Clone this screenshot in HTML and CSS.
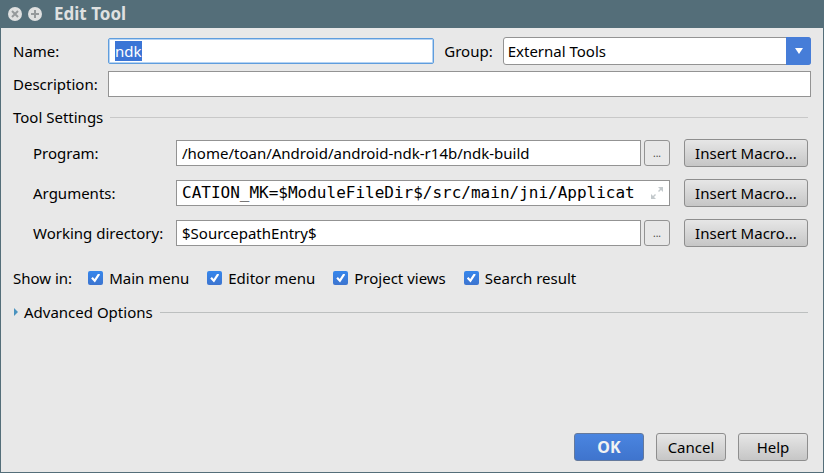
FILE: index.html
```html
<!DOCTYPE html>
<html lang="en">
<head>
<meta charset="utf-8">
<title>Edit Tool</title>
<link rel="stylesheet" href="styles.css">
</head>
<body>
<form class="dialog">
  <header class="titlebar">
    <button type="button" class="wm" aria-label="Close"><svg viewBox="0 0 14 14"><circle cx="7" cy="7" r="7" fill="#dfe0e0"/><path d="M4 4l6 6M10 4l-6 6" stroke="#95999b" stroke-width="2"/></svg></button>
    <button type="button" class="wm" aria-label="Maximize"><svg viewBox="0 0 14 14"><circle cx="7" cy="7" r="7" fill="#dfe0e0"/><path d="M7 3v8M3 7h8" stroke="#95999b" stroke-width="2"/></svg></button>
    <h1>Edit Tool</h1>
  </header>
  <main class="body">
    <div class="general">
      <label for="name">Name:</label>
      <div class="name-row">
        <input id="name" class="field name" type="text" value="ndk" autofocus>
        <label for="group">Group:</label>
        <div class="combo">
          <select id="group"><option>External Tools</option></select>
          <span class="combo-arrow"><svg viewBox="0 0 8 6"><path d="M0 0h8L4 6z" fill="#fff"/></svg></span>
        </div>
      </div>
      <label for="desc">Description:</label>
      <input id="desc" class="field" type="text">
    </div>

    <section>
      <h2 class="rule">Tool Settings</h2>
      <div class="settings">
        <label for="program">Program:</label>
        <div class="path">
          <input id="program" class="field" type="text" value="/home/toan/Android/android-ndk-r14b/ndk-build">
          <button type="button" class="browse" aria-label="Browse program">...</button>
        </div>
        <button type="button" class="btn">Insert Macro...</button>

        <label for="args">Arguments:</label>
        <div class="field expandable">
          <input id="args" type="text" value="CATION_MK=$ModuleFileDir$/src/main/jni/Applicat">
          <button type="button" class="expand" aria-label="Expand"><svg viewBox="0 0 12 12"><path d="M7 0h5v5l-2-2-2 2-1-1 2-2zM5 12H0V7l2 2 2-2 1 1-2 2z" fill="#c3c9cc"/></svg></button>
        </div>
        <button type="button" class="btn">Insert Macro...</button>

        <label for="workdir">Working directory:</label>
        <div class="path">
          <input id="workdir" class="field" type="text" value="$SourcepathEntry$">
          <button type="button" class="browse" aria-label="Browse directory">...</button>
        </div>
        <button type="button" class="btn">Insert Macro...</button>
      </div>
    </section>

    <div class="show">
      <span>Show in:</span>
      <label><input type="checkbox" checked>Main menu</label>
      <label><input type="checkbox" checked>Editor menu</label>
      <label><input type="checkbox" checked>Project views</label>
      <label><input type="checkbox" checked>Search result</label>
    </div>

    <h2 class="rule advanced"><button type="button" class="disclosure"><svg viewBox="0 0 4 8"><path d="M0 0l4 4-4 4z" fill="#4a93bf"/></svg>Advanced Options</button></h2>

    <footer class="actions">
      <button type="submit" class="btn primary">OK</button>
      <button type="button" class="btn">Cancel</button>
      <button type="button" class="btn">Help</button>
    </footer>
  </main>
</form>
<script src="script.js"></script>
</body>
</html>
```
FILE: styles.css
```css
* { box-sizing: border-box; }
body {
  margin: 0;
  background: #546e79;
  color: #000;
  font: 15px/20px "Noto Sans", "Open Sans", sans-serif;
}
input, select, button { font: inherit; color: inherit; margin: 0; }
button { padding: 0; }
svg { display: block; }

.dialog {
  min-height: 100vh;
  display: flex;
  flex-direction: column;
  border: 1px solid #546e79;
  border-top: 0;
  background: #e8e8e8;
}
.titlebar {
  height: 28px;
  display: flex;
  align-items: center;
  gap: 6px;
  padding-left: 7px;
  background: #546e79;
  color: #dfe0e0;
}
.titlebar h1 { margin: 0 0 0 6px; font-size: 17px; font-weight: 700; }
.wm { width: 14px; height: 14px; border: 0; background: none; }

.body {
  flex: 1;
  display: flex;
  flex-direction: column;
  padding: 9px 12px 11px;
}
.general {
  display: grid;
  grid-template-columns: 84px 1fr;
  gap: 6px 11px;
  align-items: center;
}
.general label { white-space: nowrap; }
.name-row { display: flex; align-items: center; gap: 10px; }
.field {
  width: 100%;
  min-width: 0;
  height: 26px;
  padding: 0 5px;
  border: 1px solid #939393;
  border-radius: 0;
  background: #fff;
  outline: 0;
}
.name { flex: 313; width: 0; padding: 0 6px; }
.name:focus {
  border-color: #5f9ddd;
  border-radius: 2px;
  box-shadow: inset 0 0 0 1px #b5d3f3;
}
::selection { background: #3b75d6; color: #fff; }
.combo { flex: 309; display: grid; grid-template-columns: 1fr 25px; height: 28px; }
.combo > * { grid-row: 1; }
.combo select {
  grid-column: 1 / 3;
  appearance: none;
  width: 100%;
  padding: 0 4px;
  border: 1px solid #939393;
  border-radius: 3px;
  background: #fff;
}
.combo-arrow {
  grid-column: 2;
  z-index: 1;
  display: grid;
  place-items: center;
  border-radius: 0 3px 3px 0;
  background: #467dd8;
  pointer-events: none;
}
.combo-arrow svg { width: 8px; height: 6px; }

.rule {
  display: flex;
  align-items: center;
  gap: 7px;
  margin: 10px 3px 0 0;
  font-size: 15px;
  font-weight: 400;
}
.rule::after { content: ""; flex: 1; height: 1px; background: #c8c8c8; }
.settings {
  display: grid;
  grid-template-columns: 131px 1fr 124px;
  gap: 12px;
  align-items: center;
  margin: 12px 3px 0 20px;
}
.settings label { white-space: nowrap; }
.path { display: flex; gap: 3px; margin-right: 2px; }
.browse {
  flex: none;
  width: 26px;
  border: 1px solid #939393;
  border-radius: 3px;
  background: #e8e8e8;
  color: #444;
  font-size: 10px;
}
.expandable { display: flex; align-items: center; width: auto; margin-right: 2px; padding-right: 6px; }
.expandable input {
  flex: 1;
  min-width: 0;
  padding: 0;
  border: 0;
  outline: 0;
  background: none;
  font: 16px/20px "DejaVu Sans Mono", monospace;
}
.expand { width: 12px; height: 12px; margin-left: 5px; border: 0; background: none; }
.btn {
  height: 28px;
  border: 1px solid #8e8e8e;
  border-radius: 3px;
  background: linear-gradient(#e6e6e6, #c6c6c6);
}

.show { display: flex; align-items: center; margin-top: 21px; }
.show span { margin-right: 16px; }
.show label { display: flex; align-items: center; gap: 6px; margin-right: 18px; }
.show input {
  appearance: none;
  width: 15px;
  height: 14px;
  border-radius: 2px;
  background: linear-gradient(#3586ec, #3d74cf);
  display: grid;
  place-items: center;
}
.show input:checked::before {
  content: "";
  width: 9px;
  height: 9px;
  background: #fff;
  clip-path: polygon(0 55%, 18% 40%, 38% 62%, 78% 0, 100% 12%, 42% 100%);
}

.advanced { margin-top: 14px; }
.disclosure { display: flex; align-items: center; gap: 6px; border: 0; background: none; }
.disclosure svg { width: 4px; height: 8px; margin-left: 1px; }
.advanced::after { background: #bcbfbf; }

.actions {
  display: flex;
  justify-content: flex-end;
  gap: 12px;
  margin: auto 3px 0 0;
}
.actions .btn { width: 70px; }
.actions .primary {
  border-color: #64799c;
  background: linear-gradient(#4a85e0, #3f74cd);
  color: #f2f2f2;
  font-size: 16px;
  font-weight: 700;
}
```
FILE: script.js
```js
const nameField = document.getElementById('name');
nameField.focus();
nameField.select();
```
